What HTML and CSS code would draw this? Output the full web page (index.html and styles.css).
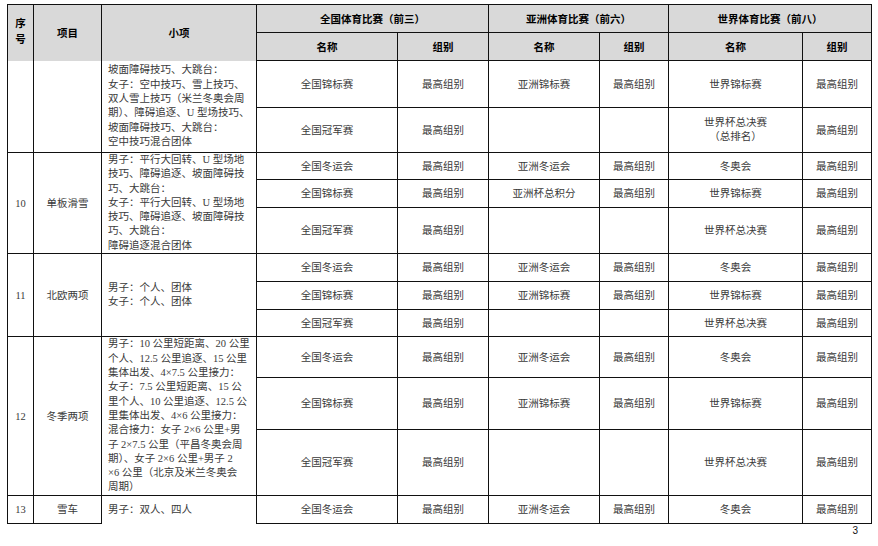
FILE: index.html
```html
<!DOCTYPE html>
<html lang="zh-CN">
<head>
<meta charset="utf-8">
<title>比赛表</title>
<link rel="stylesheet" href="styles.css">
</head>
<body>
<div class="page">
<table class="grid">
  <colgroup>
    <col class="c-no"><col class="c-item"><col class="c-sub">
    <col class="c-n1"><col class="c-g1">
    <col class="c-n2"><col class="c-g2">
    <col class="c-n3"><col class="c-g3">
  </colgroup>
  <thead>
    <tr class="h1">
      <th rowspan="2" class="open-b no-h">序<br>号</th>
      <th rowspan="2" class="open-b">项目</th>
      <th rowspan="2" class="open-b">小项</th>
      <th colspan="2">全国体育比赛（前三）</th>
      <th colspan="2">亚洲体育比赛（前六）</th>
      <th colspan="2">世界体育比赛（前八）</th>
    </tr>
    <tr class="h2">
      <th>名称</th><th>组别</th>
      <th>名称</th><th>组别</th>
      <th>名称</th><th>组别</th>
    </tr>
  </thead>
  <tbody>
    <tr class="r47">
      <td rowspan="2" class="open-t"></td>
      <td rowspan="2" class="open-t"></td>
      <td rowspan="2" class="sub open-t">坡面障碍技巧、大跳台：<br>女子：空中技巧、雪上技巧、<br>双人雪上技巧（米兰冬奥会周<br>期）、障碍追逐、U 型场技巧、<br>坡面障碍技巧、大跳台：<br>空中技巧混合团体</td>
      <td>全国锦标赛</td><td>最高组别</td><td>亚洲锦标赛</td><td>最高组别</td><td>世界锦标赛</td><td>最高组别</td>
    </tr>
    <tr class="r45">
      <td>全国冠军赛</td><td>最高组别</td><td></td><td></td><td class="two">世界杯总决赛<br>（总排名）</td><td>最高组别</td>
    </tr>

    <tr class="r27">
      <td rowspan="3" class="num">10</td>
      <td rowspan="3">单板滑雪</td>
      <td rowspan="3" class="sub">男子：平行大回转、U 型场地<br>技巧、障碍追逐、坡面障碍技<br>巧、大跳台：<br>女子：平行大回转、U 型场地<br>技巧、障碍追逐、坡面障碍技<br>巧、大跳台：<br>障碍追逐混合团体</td>
      <td>全国冬运会</td><td>最高组别</td><td>亚洲冬运会</td><td>最高组别</td><td>冬奥会</td><td>最高组别</td>
    </tr>
    <tr class="r28">
      <td>全国锦标赛</td><td>最高组别</td><td>亚洲杯总积分</td><td>最高组别</td><td>世界锦标赛</td><td>最高组别</td>
    </tr>
    <tr class="r46">
      <td>全国冠军赛</td><td>最高组别</td><td></td><td></td><td>世界杯总决赛</td><td>最高组别</td>
    </tr>

    <tr class="r28">
      <td rowspan="3" class="num">11</td>
      <td rowspan="3">北欧两项</td>
      <td rowspan="3" class="sub">男子：个人、团体<br>女子：个人、团体</td>
      <td>全国冬运会</td><td>最高组别</td><td>亚洲冬运会</td><td>最高组别</td><td>冬奥会</td><td>最高组别</td>
    </tr>
    <tr class="r28">
      <td>全国锦标赛</td><td>最高组别</td><td>亚洲锦标赛</td><td>最高组别</td><td>世界锦标赛</td><td>最高组别</td>
    </tr>
    <tr class="r27">
      <td>全国冠军赛</td><td>最高组别</td><td></td><td></td><td>世界杯总决赛</td><td>最高组别</td>
    </tr>

    <tr class="r41">
      <td rowspan="3" class="num">12</td>
      <td rowspan="3">冬季两项</td>
      <td rowspan="3" class="sub">男子：10 公里短距离、20 公里<br>个人、12.5 公里追逐、15 公里<br>集体出发、4×7.5 公里接力：<br>女子：7.5 公里短距离、15 公<br>里个人、10 公里追逐、12.5 公<br>里集体出发、4×6 公里接力：<br>混合接力：女子 2×6 公里+男<br>子 2×7.5 公里（平昌冬奥会周<br>期）、女子 2×6 公里+男子 2<br>×6 公里（北京及米兰冬奥会<br>周期）</td>
      <td>全国冬运会</td><td>最高组别</td><td>亚洲冬运会</td><td>最高组别</td><td>冬奥会</td><td>最高组别</td>
    </tr>
    <tr class="r52">
      <td>全国锦标赛</td><td>最高组别</td><td>亚洲锦标赛</td><td>最高组别</td><td>世界锦标赛</td><td>最高组别</td>
    </tr>
    <tr class="r66">
      <td>全国冠军赛</td><td>最高组别</td><td></td><td></td><td>世界杯总决赛</td><td>最高组别</td>
    </tr>

    <tr class="r28">
      <td class="num">13</td>
      <td>雪车</td>
      <td class="sub open-b">男子：双人、四人</td>
      <td>全国冬运会</td><td>最高组别</td><td>亚洲冬运会</td><td>最高组别</td><td>冬奥会</td><td>最高组别</td>
    </tr>
  </tbody>
</table>
<div class="folio">3</div>
</div>
</body>
</html>
```

FILE: styles.css
```css
html, body {
  margin: 0;
  padding: 0;
  background: #ffffff;
}

.page {
  padding: 4px 0 0 7px;
  width: 864px;
}

.grid {
  border-collapse: collapse;
  table-layout: fixed;
  width: 864px;
  font-family: "Liberation Serif", "Noto Sans CJK SC", serif;
  font-size: 10.5px;
  color: #3a3a3a;
}

.c-no { width: 26px; }
.c-item { width: 68px; }
.c-sub { width: 155px; }
.c-n1 { width: 141px; }
.c-g1 { width: 91px; }
.c-n2 { width: 111px; }
.c-g2 { width: 69px; }
.c-n3 { width: 134px; }
.c-g3 { width: 69px; }

.grid th,
.grid td {
  border: 1px solid #111111;
  padding: 0 2px;
  text-align: center;
  vertical-align: middle;
  white-space: nowrap;
  overflow: hidden;
}

.grid th {
  background: #d9d9d9;
  color: #000000;
  font-family: "Noto Sans CJK SC", sans-serif;
  font-weight: 700;
  font-size: 10.5px;
  line-height: 12px;
}

.grid th.no-h {
  line-height: 15.5px;
  padding-bottom: 4px;
}

.grid td {
  line-height: 13px;
}

.grid td.sub {
  text-align: left;
  padding: 0 2px 0 6px;
  line-height: 14.3px;
}

.grid td.two {
  line-height: 14px;
}

.open-b { border-bottom-style: hidden !important; }
.open-t { border-top-style: hidden !important; }

.h1 { height: 28px; }
.h2 { height: 28px; }
.r27 { height: 27px; }
.r28 { height: 28px; }
.r41 { height: 41px; }
.r45 { height: 45px; }
.r46 { height: 46px; }
.r47 { height: 47px; }
.r52 { height: 52px; }
.r66 { height: 66px; }

.folio {
  font-family: "Liberation Sans", "Noto Sans", sans-serif;
  font-size: 10px;
  line-height: 12px;
  color: #111111;
  text-align: right;
  padding: 1px 13px 0 0;
}
```
